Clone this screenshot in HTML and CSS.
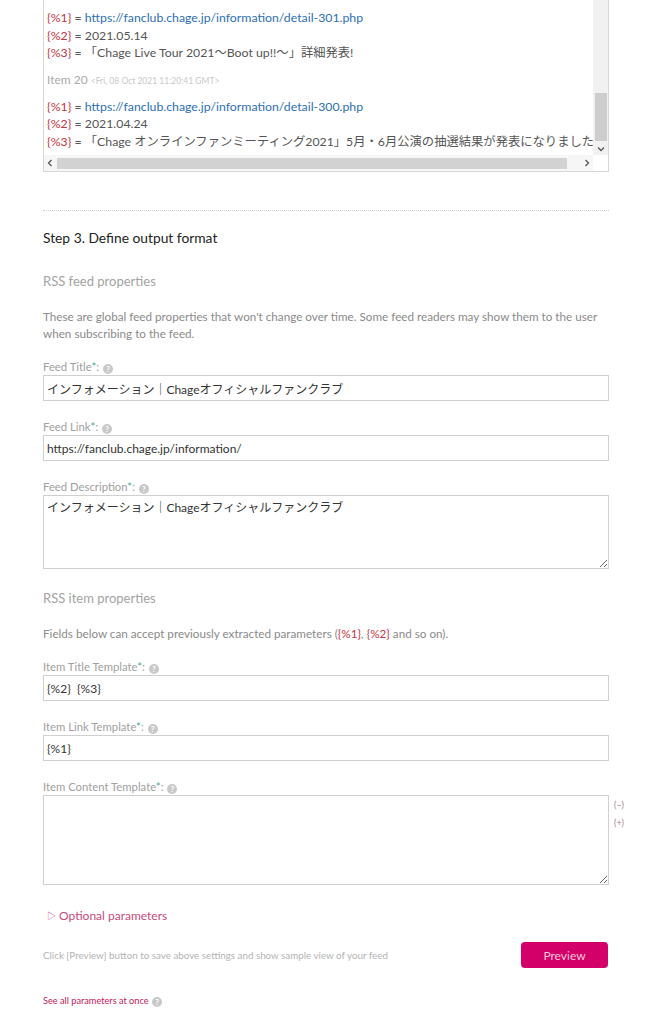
FILE: index.html
```html
<!DOCTYPE html>
<html lang="ja">
<head>
<meta charset="utf-8">
<title>Define output format</title>
<link rel="stylesheet" href="styles.css">
</head>
<body>
<div class="page">
  <div class="result">
    <div class="result-content">
      <div class="vars">
        <div class="var"><span class="p">{%1}</span> = <span class="url">https://fanclub.chage.jp/information/detail-301.php</span></div>
        <div class="var"><span class="p">{%2}</span> = 2021.05.14</div>
        <div class="var"><span class="p">{%3}</span> = 「Chage Live Tour 2021～Boot up!!～」詳細発表!</div>
      </div>
      <div class="item-head">Item 20 <span class="date">&lt;Fri, 08 Oct 2021 11:20:41 GMT&gt;</span></div>
      <div class="vars">
        <div class="var"><span class="p">{%1}</span> = <span class="url">https://fanclub.chage.jp/information/detail-300.php</span></div>
        <div class="var"><span class="p">{%2}</span> = 2021.04.24</div>
        <div class="var"><span class="p">{%3}</span> = 「Chage オンラインファンミーティング2021」5月・6月公演の抽選結果が発表になりました</div>
      </div>
    </div>
    <div class="vscroll">
      <div class="vtrack"><div class="vthumb"></div></div>
      <div class="sb-btn"><svg width="8" height="6" viewBox="0 0 8 6"><path d="M1 1.5 L4 4.5 L7 1.5" fill="none" stroke="#555" stroke-width="1.3"/></svg></div>
    </div>
    <div class="hscroll">
      <div class="sb-btn"><svg width="6" height="8" viewBox="0 0 6 8"><path d="M4.5 1 L1.5 4 L4.5 7" fill="none" stroke="#555" stroke-width="1.3"/></svg></div>
      <div class="htrack"><div class="hthumb"></div></div>
      <div class="sb-btn"><svg width="6" height="8" viewBox="0 0 6 8"><path d="M1.5 1 L4.5 4 L1.5 7" fill="none" stroke="#555" stroke-width="1.3"/></svg></div>
    </div>
    <div class="corner"></div>
  </div>

  <div class="divider"></div>

  <h3 class="step">Step 3. Define output format</h3>

  <h4 class="section">RSS feed properties</h4>
  <p class="note">These are global feed properties that won't change over time. Some feed readers may show them to the user when subscribing to the feed.</p>

  <div class="field">
    <label class="label">Feed Title<span class="req">*</span>: <span class="help">?</span></label>
    <input class="input" type="text" value="インフォメーション｜Chageオフィシャルファンクラブ">
  </div>
  <div class="field">
    <label class="label">Feed Link<span class="req">*</span>: <span class="help">?</span></label>
    <input class="input" type="text" value="https://fanclub.chage.jp/information/">
  </div>
  <div class="field">
    <label class="label">Feed Description<span class="req">*</span>: <span class="help">?</span></label>
    <textarea class="textarea desc">インフォメーション｜Chageオフィシャルファンクラブ</textarea>
  </div>

  <h4 class="section section-items">RSS item properties</h4>
  <p class="note">Fields below can accept previously extracted parameters (<span class="p">{%1}</span>, <span class="p">{%2}</span> and so on).</p>

  <div class="field">
    <label class="label">Item Title Template<span class="req">*</span>: <span class="help">?</span></label>
    <input class="input" type="text" value="{%2}  {%3}">
  </div>
  <div class="field">
    <label class="label">Item Link Template<span class="req">*</span>: <span class="help">?</span></label>
    <input class="input" type="text" value="{%1}">
  </div>
  <div class="field">
    <label class="label">Item Content Template<span class="req">*</span>: <span class="help">?</span></label>
    <div class="content-row">
      <textarea class="textarea content"></textarea>
      <div class="resize-ctrl">
        <span>(–)</span>
        <span>(+)</span>
      </div>
    </div>
  </div>

  <div class="optional"><span class="tri">▷</span> Optional parameters</div>

  <div class="preview-row">
    <span class="hint">Click [Preview] button to save above settings and show sample view of your feed</span>
    <button class="btn-preview" type="button">Preview</button>
  </div>

  <div class="see-all">See all parameters at once <span class="help">?</span></div>
</div>
</body>
</html>
```

FILE: styles.css
```css
* { box-sizing: border-box; }

body {
  margin: 0;
  background: #fff;
  font-family: Lato, "Noto Sans CJK JP", sans-serif;
  color: #555;
}

.page {
  width: 566px;
  margin-left: 43px;
}

/* extracted result box */
.result {
  display: grid;
  grid-template-columns: 1fr 15px;
  grid-template-rows: 155px 16px;
  border: 1px solid #d6d6d6;
  border-top: none;
}

.result-content {
  overflow: hidden;
  white-space: nowrap;
  padding: 9px 0 0 3px;
  font-size: 12.3px;
  color: #555;
}

.var {
  height: 17.5px;
  line-height: 17.5px;
}

.item-head {
  margin: 9px 0 8px;
  line-height: 18px;
  font-size: 12px;
  color: #aaa;
}

.date {
  font-size: 8.5px;
  color: #c8c8c8;
}

.p { color: #c4363f; }
.url { color: #2d6fb3; }

.vscroll {
  display: flex;
  flex-direction: column;
  background: #f1f1f1;
}

.vtrack { flex: 1; }

.vthumb {
  margin: 93px 1px 0 2px;
  height: 48px;
  background: #cdcdcd;
}

.sb-btn {
  height: 12px;
  flex: 0 0 12px;
  display: flex;
  align-items: center;
  justify-content: center;
}

.hscroll {
  display: flex;
  align-items: center;
  background: #f6f6f6;
}

.hscroll .sb-btn {
  flex: 0 0 12px;
  height: 16px;
}

.htrack {
  flex: 1;
  padding: 0 14px 0 1px;
}

.hthumb {
  height: 11px;
  background: #d2d2d2;
}

.corner { background: #fff; }

.divider {
  margin-top: 38px;
  border-top: 1px dotted #cfcfcf;
}

.step {
  margin: 18px 0 0;
  font-size: 13.8px;
  line-height: 18px;
  font-weight: normal;
  color: #222;
}

.section {
  margin: 25px 0 0;
  font-size: 13px;
  line-height: 18px;
  font-weight: normal;
  color: #a3a3a3;
}

.section-items { margin-top: 20px; }

.note {
  margin: 17.5px 0 0;
  font-size: 11.7px;
  line-height: 17px;
  color: #8a8a8a;
}

.field {
  margin-top: 17.5px;
}

.field + .field { margin-top: 18px; }

.label {
  display: block;
  height: 16px;
  line-height: 16px;
  font-size: 11.3px;
  color: #a0a0a0;
}

.req { color: #49a99a; }

.help {
  display: inline-block;
  width: 10px;
  height: 10px;
  border-radius: 50%;
  background: #c9c9c9;
  color: #fff;
  font-size: 8px;
  line-height: 10px;
  text-align: center;
  font-weight: bold;
  vertical-align: -1px;
  margin-left: 1px;
}

.input,
.textarea {
  display: block;
  width: 566px;
  margin: 0;
  border: 1px solid #d0d0d0;
  border-radius: 0;
  background: #fff;
  font-family: Lato, "Noto Sans CJK JP", sans-serif;
  font-size: 12px;
  color: #333;
  outline: none;
}

.input {
  height: 26px;
  padding: 0 3px;
}

.textarea {
  padding: 4px 3px;
  line-height: 16px;
  resize: vertical;
}

.desc { height: 74px; }

.content-row {
  display: flex;
  width: 600px;
}

.content {
  flex: 0 0 566px;
  height: 90px;
}

.resize-ctrl {
  display: flex;
  flex-direction: column;
  margin: 0 0 0 5px;
  padding-top: 1px;
  font-size: 9px;
  line-height: 18px;
  color: #a8808f;
}

.optional {
  margin-top: 22px;
  padding-left: 4px;
  font-size: 12px;
  line-height: 18px;
  color: #c44a7c;
}

.tri {
  font-size: 9px;
  vertical-align: 1px;
}

.preview-row {
  margin-top: 17px;
  display: flex;
  align-items: center;
  justify-content: space-between;
}

.hint {
  font-size: 9.8px;
  color: #b3b3b3;
}

.btn-preview {
  width: 87px;
  height: 26px;
  margin-right: 1px;
  border: none;
  border-radius: 4px;
  background: #d3006a;
  color: #f7c6dc;
  font-family: Lato, sans-serif;
  font-size: 12px;
  padding: 0;
}

.see-all {
  margin-top: 26px;
  font-size: 9.2px;
  line-height: 14px;
  color: #c2185b;
}
```
